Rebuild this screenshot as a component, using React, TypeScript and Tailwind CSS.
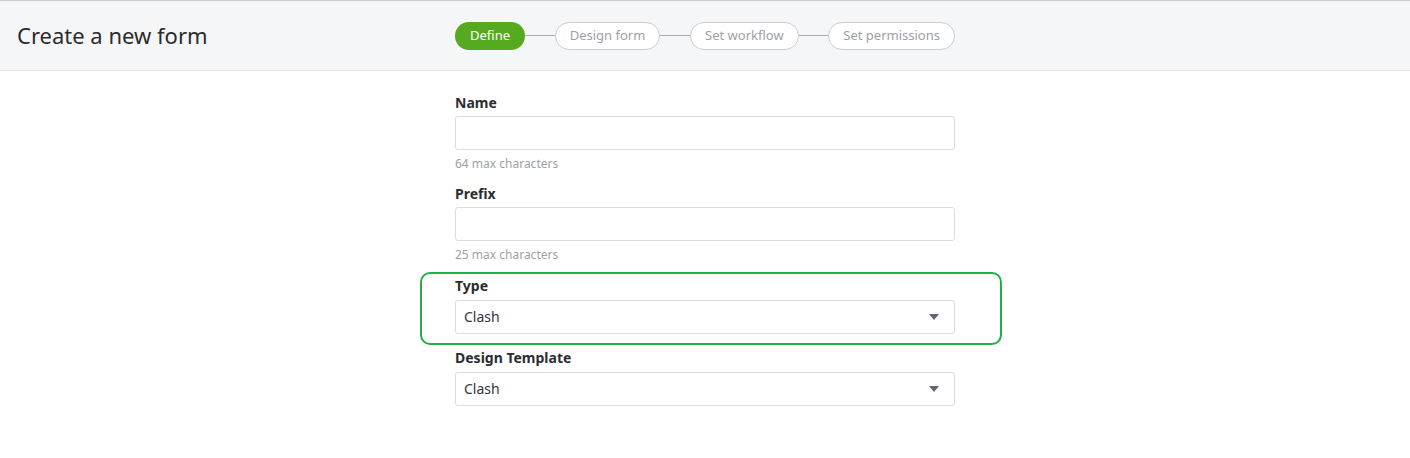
import { Fragment } from 'react';

const steps = ['Define', 'Design form', 'Set workflow', 'Set permissions'];

function Caret() {
  return (
    <svg width="10" height="6" viewBox="0 0 10 6" className="shrink-0">
      <path d="M0 0h10L5 6z" fill="#5f6672" />
    </svg>
  );
}

function Field({ label, help, className = '' }: { label: string; help: string; className?: string }) {
  return (
    <div className={className}>
      <div className="text-sm leading-5 font-bold text-[#2b2d31]">{label}</div>
      <div className="mt-[3px] h-[34px] rounded-[3px] border border-[#d9dce1] bg-white" />
      <div className="mt-[6px] text-xs leading-4 text-[#9ba1a9]">{help}</div>
    </div>
  );
}

function Select({ label, value, className = '' }: { label: string; value: string; className?: string }) {
  return (
    <div className={className}>
      <div className="text-sm leading-5 font-bold text-[#2b2d31]">{label}</div>
      <div className="mt-1 flex h-[34px] items-center justify-between rounded-[3px] border border-[#d9dce1] bg-white pl-2 pr-[15px]">
        <span className="text-sm text-[#33363b]">{value}</span>
        <Caret />
      </div>
    </div>
  );
}

export default function App() {
  return (
    <div className="min-h-[458px] bg-white font-['Noto_Sans',sans-serif]">
      <header className="flex h-[71px] items-center border-t border-b border-t-[#c9ccd3] border-b-[#e3e5e9] bg-[#f5f6f8]">
        <h1 className="w-[455px] pl-[17px] text-[22px] text-[#2b2b2b]">Create a new form</h1>
        <div className="flex w-[500px] items-center">
          {steps.map((s, i) => (
            <Fragment key={s}>
              {i > 0 && <div className="h-px flex-1 bg-[#a9adb4]" />}
              <div
                className={
                  i === 0
                    ? 'flex h-[28px] shrink-0 items-center rounded-full bg-[#57a91f] px-[15px] text-[13px] text-white'
                    : 'flex h-[28px] shrink-0 items-center rounded-full border border-[#c9ccd2] bg-white px-[14px] text-[13px] text-[#9ca1a9]'
                }
              >
                {s}
              </div>
            </Fragment>
          ))}
        </div>
      </header>
      <main className="ml-[455px] w-[500px] pt-[22px]">
        <Field label="Name" help="64 max characters" />
        <Field label="Prefix" help="25 max characters" className="mt-[12px]" />
        <div className="relative mt-[13px]">
          <div className="pointer-events-none absolute -top-[4px] -bottom-[11px] -left-[35px] -right-[47px] rounded-[10px] border-2 border-[#1fb04c]" />
          <Select label="Type" value="Clash" />
        </div>
        <Select label="Design Template" value="Clash" className="mt-[14px]" />
      </main>
    </div>
  );
}
